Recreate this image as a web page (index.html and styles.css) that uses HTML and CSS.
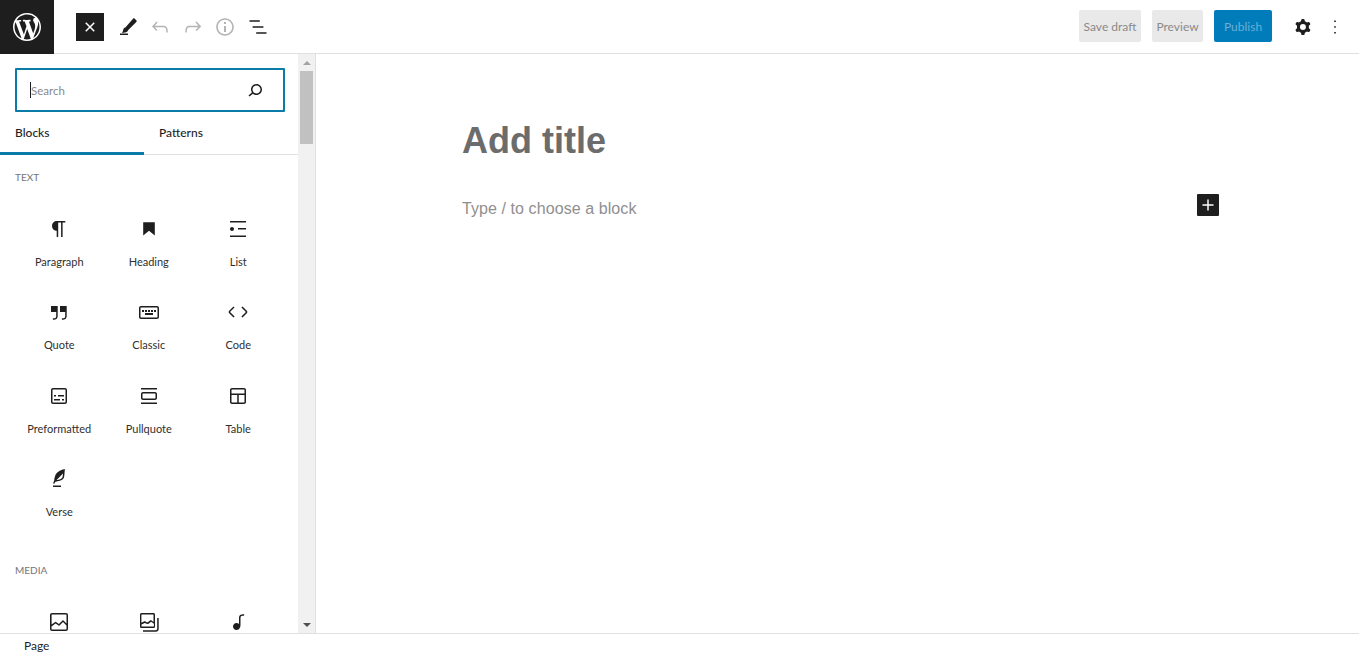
FILE: index.html
```html
<!DOCTYPE html>
<html lang="en">
<head>
    <meta charset="UTF-8">
    <meta name="viewport" content="width=device-width, initial-scale=1.0">
    <title>Add New Page</title>
    <link rel="stylesheet" href="styles.css">
</head>
<body>
    <header class="topbar">
        <a href="#" class="logo">
            <svg viewBox="0 0 20 20" width="28" height="28"><path fill="#fff" d="M20 10c0-5.51-4.49-10-10-10C4.48 0 0 4.49 0 10c0 5.52 4.48 10 10 10 5.51 0 10-4.48 10-10zM7.78 15.37L4.37 6.22c.55-.02 1.17-.08 1.17-.08.5-.06.44-1.13-.06-1.11 0 0-1.45.11-2.37.11-.18 0-.37 0-.58-.01C4.12 2.69 6.87 1.11 10 1.11c2.33 0 4.45.87 6.05 2.34-.68-.11-1.65.39-1.65 1.58 0 .74.45 1.36.9 2.1.35.61.55 1.36.55 2.46 0 1.49-1.4 5-1.4 5l-3.03-8.37c.54-.02.82-.17.82-.17.5-.05.44-1.25-.06-1.22 0 0-1.44.12-2.38.12-.87 0-2.33-.12-2.33-.12-.5-.03-.56 1.2-.06 1.22l.92.08 1.26 3.41zM17.41 10c.24-.64.74-1.87.43-4.25.7 1.29 1.05 2.71 1.05 4.25 0 3.29-1.73 6.24-4.4 7.78.97-2.59 1.94-5.2 2.92-7.78zM6.1 18.09C3.12 16.65 1.11 13.53 1.11 10c0-1.3.23-2.48.72-3.59C3.25 10.3 4.67 14.2 6.1 18.09zm4.03-6.63l2.58 6.98c-.86.29-1.76.45-2.71.45-.79 0-1.57-.11-2.29-.33.81-2.38 1.62-4.74 2.42-7.1z"/></svg>
        </a>
        <div class="tools">
            <button class="tool tool-close">
                <svg viewBox="0 0 24 24" width="24" height="24"><path d="M12 13.06l3.712 3.713 1.061-1.06L13.061 12l3.712-3.712-1.06-1.06L12 10.938 8.288 7.227l-1.061 1.06L10.939 12l-3.712 3.712 1.06 1.061L12 13.061z"/></svg>
            </button>
            <button class="tool">
                <svg viewBox="0 0 24 24" width="24" height="24"><path d="M4 20h8v-1.5H4V20zM18.700 3.700l1.600 1.600c.5.500.5 1.200 0 1.700L12 15.300c-.3 1.300-1.400 2.100-3 2.300l-3 .3c.6-.9 1-2 1.200-3 .2-1.300 1-2.300 2.200-2.500l7.600-8.700c.6-.6 1.300-.6 1.700 0z"/></svg>
            </button>
            <button class="tool tool-off">
                <svg viewBox="0 0 24 24" width="24" height="24"><path d="M18.300 11.700c-.6-.6-1.400-.9-2.300-.9H6.700l2.900-3.300-1.100-1-4.500 5L8.500 16l1-1-2.700-2.700H16c.5 0 .9.2 1.300.5 1 1 1 3.400 1 4.500v.3h1.500v-.2c0-1.500 0-4.300-1.500-5.700z"/></svg>
            </button>
            <button class="tool tool-off">
                <svg viewBox="0 0 24 24" width="24" height="24"><path d="M15.600 6.500l-1.100 1 2.900 3.300H8c-.9 0-1.700.3-2.300.9-1.400 1.500-1.400 4.200-1.400 5.600v.2h1.500v-.3c0-1.100 0-3.500 1-4.500.3-.3.7-.5 1.300-.5h9.200L14.500 15l1.100 1.100 4.600-4.600-4.600-5z"/></svg>
            </button>
            <button class="tool tool-off">
                <svg viewBox="0 0 24 24" width="24" height="24"><path d="M12 3.200c-4.800 0-8.800 3.900-8.800 8.800 0 4.800 3.900 8.800 8.800 8.800 4.800 0 8.800-3.900 8.800-8.800 0-4.800-4-8.800-8.800-8.800zm0 16c-4 0-7.200-3.300-7.200-7.200C4.800 8 8 4.800 12 4.800s7.200 3.300 7.200 7.200c0 4-3.200 7.200-7.200 7.200zM11 17h2v-6h-2v6zm0-8h2V7h-2v2z"/></svg>
            </button>
            <button class="tool">
                <svg viewBox="0 0 24 24" width="24" height="24"><path d="M13.800 5.200H3.500v1.500h10.300V5.200zm-3.600 12v1.500h10.300v-1.500H10.200zm7.200-6H6.600v1.500h10.800v-1.500z"/></svg>
            </button>
        </div>
        <div class="actions">
            <a href="#" class="btn btn-draft">Save draft</a>
            <a href="#" class="btn btn-preview">Preview</a>
            <a href="#" class="btn btn-publish">Publish</a>
            <button class="tool tool-cog">
                <svg viewBox="0 0 24 24" width="24" height="24"><path fill-rule="evenodd" d="M10.289 4.836A1 1 0 0 1 11.275 4h1.306a1 1 0 0 1 .987.836l.244 1.466c.787.26 1.503.679 2.108 1.218l1.393-.522a1 1 0 0 1 1.216.437l.653 1.130a1 1 0 0 1-.23 1.273l-1.148.944a6.025 6.025 0 0 1 0 2.435l1.149.946a1 1 0 0 1 .23 1.272l-.653 1.130a1 1 0 0 1-1.216.437l-1.394-.522c-.605.54-1.320.958-2.108 1.218l-.244 1.466a1 1 0 0 1-.987.836h-1.306a1 1 0 0 1-.986-.836l-.244-1.466a5.995 5.995 0 0 1-2.108-1.218l-1.394.522a1 1 0 0 1-1.217-.436l-.653-1.131a1 1 0 0 1 .23-1.272l1.149-.946a6.026 6.026 0 0 1 0-2.435l-1.148-.944a1 1 0 0 1-.23-1.272l.653-1.131a1 1 0 0 1 1.216-.437l1.393.522a5.994 5.994 0 0 1 2.108-1.218l.244-1.466zM14.929 12a3 3 0 1 1-6 0 3 3 0 0 1 6 0z"/></svg>
            </button>
            <button class="tool tool-more">
                <svg viewBox="0 0 24 24" width="24" height="24"><path d="M12.800 18.500h-1.600v-1.600h1.600v1.600zm0-5.700h-1.600v-1.600h1.600v1.600zm0-5.700h-1.600V5.500h1.600v1.600z"/></svg>
            </button>
        </div>
    </header>

    <div class="workspace">
        <aside class="inserter">
            <div class="inserter-panel">
                <div class="search">
                    <span class="caret"></span>
                    <span class="search-text">Search</span>
                    <svg viewBox="0 0 24 24" width="24" height="24"><path d="M13.500 6C10.500 6 8 8.500 8 11.500c0 1.100.3 2.100.9 3l-3.400 3 1 1.100 3.400-2.900c1 .9 2.200 1.400 3.600 1.400 3 0 5.500-2.500 5.500-5.500C19 8.500 16.500 6 13.500 6zm0 9.500c-2.200 0-4-1.800-4-4s1.800-4 4-4 4 1.800 4 4-1.800 4-4 4z"/></svg>
                </div>
                <div class="tabs">
                    <a href="#" class="tab active">Blocks</a>
                    <a href="#" class="tab">Patterns</a>
                </div>

                <h2 class="group-title">Text</h2>
                <div class="block-grid">
                    <div class="block-item">
                        <svg viewBox="0 0 24 24" width="24" height="24"><path d="M18.300 4H9.900v-.1l-.9.2c-2.300.4-4 2.400-4 4.800s1.700 4.400 4 4.800l.7.1V20h1.500V5.500h2.900V20h1.500V5.500h2.700V4z"/></svg>
                        <span>Paragraph</span>
                    </div>
                    <div class="block-item">
                        <svg viewBox="0 0 24 24" width="24" height="24"><path d="M6.200 5.200v13.400l5.800-4.800 5.800 4.800V5.200z"/></svg>
                        <span>Heading</span>
                    </div>
                    <div class="block-item">
                        <svg viewBox="0 0 24 24" width="24" height="24"><path d="M4 4v1.500h16V4H4zm8 8.500h8V11h-8v1.500zM4 20h16v-1.500H4V20zm4-8c0-1.100-.9-2-2-2s-2 .9-2 2 .9 2 2 2 2-.9 2-2z"/></svg>
                        <span>List</span>
                    </div>
                    <div class="block-item">
                        <svg viewBox="0 0 24 24" width="24" height="24"><path d="M13 6v6h5.200v4c0 .8-.2 1.400-.5 1.700-.6.6-1.600.6-2.500.5h-.3v1.500h.5c1 0 2.300-.1 3.300-1 .6-.6 1-1.600 1-2.800V6H13zm-9 6h5.200v4c0 .8-.2 1.400-.5 1.700-.6.6-1.600.6-2.500.5h-.3v1.500h.5c1 0 2.300-.1 3.300-1 .6-.6 1-1.600 1-2.800V6H4v6z"/></svg>
                        <span>Quote</span>
                    </div>
                    <div class="block-item">
                        <svg viewBox="0 0 24 24" width="24" height="24"><path d="M20 6H4c-1.100 0-2 .9-2 2v9c0 1.100.9 2 2 2h16c1.100 0 2-.9 2-2V8c0-1.100-.9-2-2-2zm.5 11c0 .3-.2.5-.5.5H4c-.3 0-.5-.2-.5-.5V8c0-.3.2-.5.5-.5h16c.3 0 .5.2.5.5v9zM10 10H8v2h2v-2zm-5 0v2h2v-2H5zm6 2h2v-2h-2v2zm3 0h2v-2h-2v2zm3 0h2v-2h-2v2zm-9 3h8v-2H8v2z"/></svg>
                        <span>Classic</span>
                    </div>
                    <div class="block-item">
                        <svg viewBox="0 0 24 24" width="24" height="24"><path d="M20.800 10.700l-4.300-4.300-1.100 1.100 4.300 4.300c.1.1.1.3 0 .4l-4.300 4.300 1.100 1.100 4.300-4.300c.7-.8.7-1.900 0-2.600zM4.200 11.800l4.300-4.300-1-1-4.300 4.300c-.7.7-.7 1.800 0 2.500l4.300 4.300 1.100-1.100-4.300-4.300c-.2-.1-.2-.3-.1-.4z"/></svg>
                        <span>Code</span>
                    </div>
                    <div class="block-item">
                        <svg viewBox="0 0 24 24" width="24" height="24"><path d="M18 4H6c-1.100 0-2 .9-2 2v12c0 1.100.9 2 2 2h12c1.100 0 2-.9 2-2V6c0-1.100-.9-2-2-2zm.5 14c0 .3-.2.5-.5.5H6c-.3 0-.5-.2-.5-.5V6c0-.3.2-.5.5-.5h12c.3 0 .5.2.5.5v12zM7 16.500h6V15H7v1.500zm4-4h6V11h-6v1.500zM9 11H7v1.500h2V11zm6 5.500h2V15h-2v1.500z"/></svg>
                        <span>Preformatted</span>
                    </div>
                    <div class="block-item">
                        <svg viewBox="0 0 24 24" width="24" height="24"><path d="M18 8H6c-1.100 0-2 .9-2 2v4c0 1.100.9 2 2 2h12c1.100 0 2-.9 2-2v-4c0-1.100-.9-2-2-2zm.5 6c0 .3-.2.5-.5.5H6c-.3 0-.5-.2-.5-.5v-4c0-.3.2-.5.5-.5h12c.3 0 .5.2.5.5v4zM4 4v1.500h16V4H4zm0 16h16v-1.500H4V20z"/></svg>
                        <span>Pullquote</span>
                    </div>
                    <div class="block-item">
                        <svg viewBox="0 0 24 24" width="24" height="24"><path d="M4 6v12c0 1.100.9 2 2 2h12c1.100 0 2-.9 2-2V6c0-1.100-.9-2-2-2H6c-1.100 0-2 .9-2 2zm1.500 0c0-.3.2-.5.5-.5h12c.3 0 .5.2.5.5v3.500h-13zm0 5h5.750v7.500H6c-.3 0-.5-.2-.5-.5zm7.250 7.500V11h5.750v7c0 .3-.2.5-.5.5z"/></svg>
                        <span>Table</span>
                    </div>
                    <div class="block-item">
                        <svg viewBox="0 0 24 24" width="24" height="24"><path fill-rule="evenodd" d="M17.800 2l-.9.3c-.1 0-3.600 1-5.200 2.100C10 5.500 9.300 6.500 8.900 7.100c-.6.9-1.700 4.700-1.700 6.300l-.9 2.300c-.2.4 0 .8.4 1 .1 0 .2.1.3.1.3 0 .6-.2.7-.5l.6-1.500c.3 0 .7-.1 1.200-.2.7-.1 1.400-.3 2.200-.5.8-.2 1.600-.5 2.400-.8.7-.3 1.400-.7 1.900-1.200s.8-1.200 1-1.900c.2-.7.3-1.600.4-2.400.1-.8.1-1.700.2-2.500 0-.8.1-1.500.2-2.100V2zm-1.900 5.600c-.1.8-.2 1.500-.3 2.100-.2.6-.4 1-.6 1.300-.3.3-.8.6-1.400.9-.7.3-1.400.5-2.200.8-.6.2-1.300.3-1.800.4L15 7.500c.3-.3.6-.7 1-1.100 0 .4 0 .8-.1 1.200zM6 20h8v-1.500H6V20z"/></svg>
                        <span>Verse</span>
                    </div>
                </div>

                <h2 class="group-title group-media">Media</h2>
                <div class="block-grid">
                    <div class="block-item">
                        <svg viewBox="0 0 24 24" width="24" height="24"><path d="M19 3H5c-1.100 0-2 .9-2 2v14c0 1.100.9 2 2 2h14c1.100 0 2-.9 2-2V5c0-1.100-.9-2-2-2zM5 4.500h14c.3 0 .5.2.5.5v8.400l-3-2.900c-.3-.3-.8-.3-1 0L11.900 14 9 12c-.3-.2-.6-.2-.8 0l-3.600 2.600V5c-.1-.3.1-.5.4-.5zm14 15H5c-.3 0-.5-.2-.5-.5v-2.400l4.100-3 3 1.900c.3.2.7.2.9-.1L16 12l3.500 3.400V19c0 .3-.2.5-.5.5z"/></svg>
                    </div>
                    <div class="block-item">
                        <svg viewBox="0 0 24 24" width="24" height="24"><path d="M20.200 8v11c0 .7-.6 1.200-1.200 1.200H6v1.500h13c1.500 0 2.700-1.200 2.700-2.800V8zM18 16.400V4.600c0-.9-.7-1.600-1.600-1.600H4.600C3.700 3 3 3.700 3 4.600v11.800c0 .9.7 1.600 1.600 1.600h11.800c.9 0 1.600-.7 1.600-1.600zM4.500 4.600c0-.1.1-.1.1-.1h11.800c.1 0 .1.1.1.1V12l-2.300-1.700c-.3-.2-.6-.2-.9 0l-2.900 2.100L8 11.300c-.2-.1-.5-.1-.7 0l-2.900 1.500V4.600zm0 11.800v-1.800l3.200-1.700 2.800 1.100c.2.1.5.1.7-.1l2.900-2.100 2.800 2V16.400c0 .1-.1.1-.1.1H4.600c-.1 0-.1-.1-.1-.1z"/></svg>
                    </div>
                    <div class="block-item">
                        <svg viewBox="0 0 24 24" width="24" height="24"><path d="M17.700 4.300c-1.200 0-2.800 0-3.800 1-.6.6-.9 1.500-.9 2.600V14c-.6-.6-1.500-1-2.500-1C8.600 13 7 14.600 7 16.500S8.600 20 10.500 20c1.500 0 2.800-1 3.300-2.300.5-.8.7-1.800.7-2.700V7.900c0-.7.2-1.200.5-1.600.6-.6 1.800-.6 2.800-.6h.3V4.300h-.4z"/></svg>
                    </div>
                </div>
            </div>

            <div class="scrollbar">
                <span class="arrow arrow-up"></span>
                <div class="scroll-track"><div class="scroll-thumb"></div></div>
                <span class="arrow arrow-down"></span>
            </div>
        </aside>

        <main class="editor">
            <div class="canvas">
                <h1 class="post-title">Add title</h1>
                <div class="block-row">
                    <p class="placeholder">Type / to choose a block</p>
                    <button class="add-block">
                        <svg viewBox="0 0 24 24" width="24" height="24"><path d="M18 11.200h-5.200V6h-1.600v5.200H6v1.600h5.200V18h1.600v-5.200H18z"/></svg>
                    </button>
                </div>
            </div>
        </main>
    </div>

    <footer class="statusbar">Page</footer>
</body>
</html>
```

FILE: styles.css
```css
* {
    box-sizing: border-box;
}
html, body {
    height: 100%;
}
body {
    margin: 0;
    display: flex;
    flex-direction: column;
    overflow: hidden;
    background-color: #fff;
    color: #1e1e1e;
    font-family: Lato, "Open Sans", sans-serif;
    font-size: 12px;
}
button {
    border: none;
    background: none;
    padding: 0;
    cursor: pointer;
}
a {
    color: inherit;
    text-decoration: none;
}
svg {
    display: block;
    fill: currentColor;
}

/* top bar */
.topbar {
    flex: none;
    height: 54px;
    display: flex;
    align-items: center;
    border-bottom: 1px solid #e0e0e0;
}
.logo {
    flex: none;
    width: 54px;
    height: 54px;
    margin-bottom: -1px;
    display: flex;
    align-items: center;
    justify-content: center;
    background-color: #1e1e1e;
}
.tools {
    display: flex;
    align-items: center;
    margin-left: 22px;
    gap: 8.5px;
}
.tool {
    width: 24px;
    height: 24px;
    display: flex;
    align-items: center;
    justify-content: center;
    color: #1e1e1e;
}
.tool-close {
    width: 28px;
    height: 28px;
    color: #fff;
    background-color: #1e1e1e;
    margin-right: 3px;
}
.tool-off {
    color: #b4b4b4;
}
.actions {
    margin-left: auto;
    display: flex;
    align-items: center;
    padding-right: 12px;
}
.btn {
    height: 32px;
    margin: -1px 11px 0 0;
    display: flex;
    align-items: center;
    justify-content: center;
    border-radius: 2px;
    background-color: #e9e9e9;
    color: #8a8a8a;
}
.btn-draft {
    width: 62px;
}
.btn-preview {
    width: 51px;
}
.btn-publish {
    width: 58px;
    background-color: #007cba;
    color: #69afd6;
}
.tool-cog {
    margin-left: 8px;
}
.tool-more {
    margin-left: 8px;
}

/* inserter sidebar */
.workspace {
    flex: 1;
    min-height: 0;
    display: flex;
}
.inserter {
    flex: none;
    width: 316px;
    display: flex;
    border-right: 1px solid #e0e0e0;
}
.inserter-panel {
    width: 298px;
    overflow: hidden;
    padding-top: 14px;
}
.search {
    height: 44px;
    margin: 0 13px 0 15px;
    padding: 0 16px 0 13px;
    display: flex;
    align-items: center;
    border: 2px solid #0b7ca8;
    border-radius: 1px;
}
.caret {
    width: 1px;
    height: 16px;
    background-color: #1e1e1e;
}
.search-text {
    flex: 1;
    font-size: 11.5px;
    color: #8a8a8a;
}
.tabs {
    height: 43px;
    display: flex;
    border-bottom: 1px solid #e0e0e0;
}
.tab {
    width: 144px;
    height: 43px;
    padding: 0 0 3px 15px;
    display: flex;
    align-items: center;
    font-weight: 500;
}
.tab.active {
    padding-bottom: 0;
    border-bottom: 3px solid #0b7ca8;
}
.group-title {
    margin: 15px 0 16px 15px;
    font-size: 10px;
    line-height: 14px;
    font-weight: 400;
    text-transform: uppercase;
    color: #757575;
}
.group-media {
    margin-top: 30px;
}
.block-grid {
    display: grid;
    grid-template-columns: repeat(3, 89.5px);
    grid-auto-rows: 83.33px;
    padding-left: 14.5px;
}
.block-item {
    display: flex;
    flex-direction: column;
    align-items: center;
    padding-top: 17px;
}
.block-item span {
    margin-top: 13px;
    font-size: 11px;
    line-height: 16px;
    color: #2f2f2f;
}

/* fake scrollbar, the reference has the windows one */
.scrollbar {
    width: 17px;
    display: flex;
    flex-direction: column;
    background-color: #f1f1f1;
}
.arrow {
    flex: none;
    height: 17px;
    display: flex;
    align-items: center;
    justify-content: center;
}
.arrow::before {
    content: "";
    border-left: 4px solid transparent;
    border-right: 4px solid transparent;
}
.arrow-up::before {
    border-bottom: 4px solid #a3a3a3;
}
.arrow-down::before {
    border-top: 4px solid #505050;
}
.scroll-track {
    flex: 1;
}
.scroll-thumb {
    height: 73px;
    margin: 0 2px;
    background-color: #c1c1c1;
}

/* editor */
.editor {
    flex: 1;
    min-width: 0;
}
.canvas {
    width: 757px;
    margin-left: 146px;
    padding-top: 65px;
}
.post-title {
    margin: 0;
    font-family: "Liberation Sans", Arial, sans-serif;
    font-size: 36px;
    line-height: 44px;
    font-weight: 700;
    color: #6c6c6c;
}
.block-row {
    margin-top: 24px;
    display: flex;
    align-items: flex-start;
    justify-content: space-between;
}
.placeholder {
    margin: 10px 0 0;
    font-family: "Liberation Sans", Arial, sans-serif;
    font-size: 16px;
    line-height: 24px;
    letter-spacing: 0.08px;
    color: #8f8f8f;
}
.add-block {
    width: 22px;
    height: 22px;
    margin-top: 7px;
    display: flex;
    align-items: center;
    justify-content: center;
    background-color: #1e1e1e;
    color: #fff;
    border-radius: 1px;
}

/* bottom bar */
.statusbar {
    flex: none;
    height: 23px;
    padding-left: 24px;
    display: flex;
    align-items: center;
    border-top: 1px solid #e0e0e0;
    background-color: #fff;
}
```
